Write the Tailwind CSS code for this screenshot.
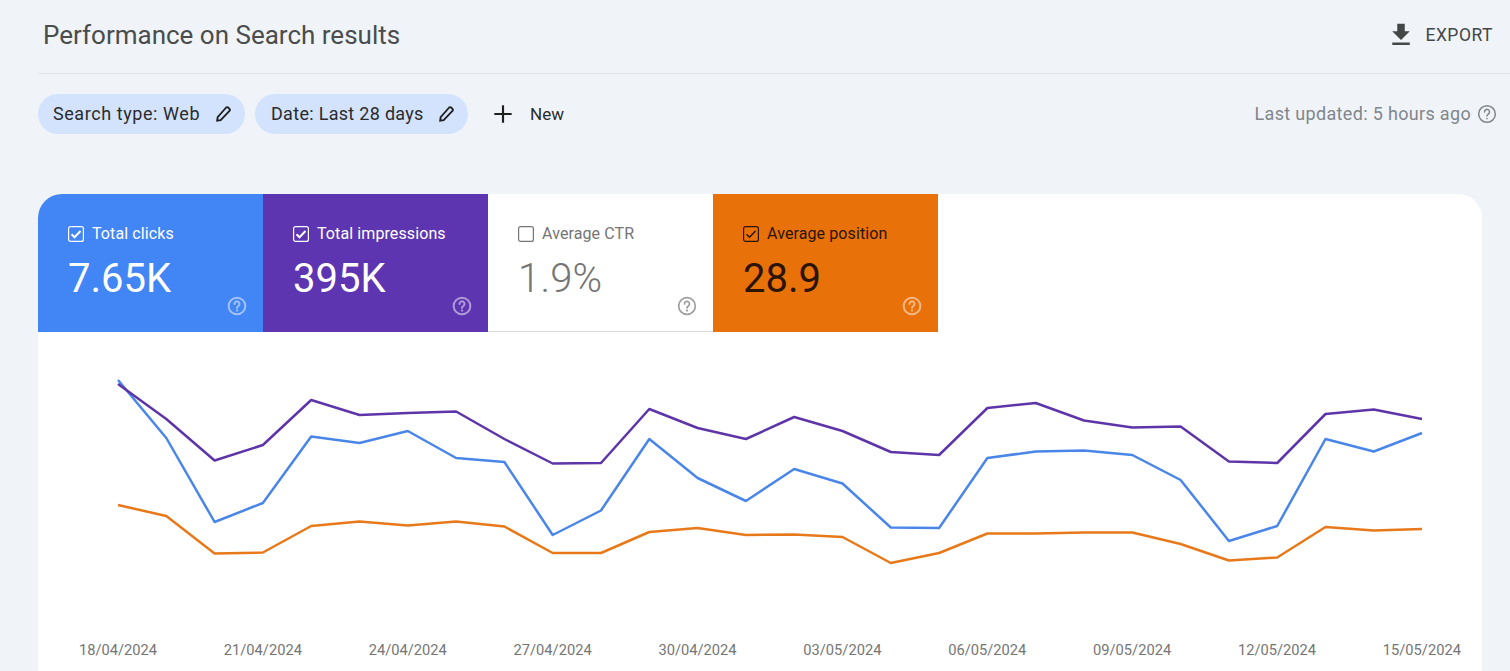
<!DOCTYPE html>
<html lang="en">
<head>
<meta charset="utf-8">
<title>Performance on Search results</title>
<script src="https://cdn.jsdelivr.net/npm/@tailwindcss/browser@4"></script>
</head>
<body class="h-[671px] overflow-hidden bg-[#f0f4f9] font-['Roboto',sans-serif]">
<header class="ml-[38px] flex h-[74px] items-center justify-between border-b border-[#dfe2e7] pb-[3px] pl-[5px] pr-[17px]">
  <h1 class="text-[26px] font-normal text-[#4a4d4c]">Performance on Search results</h1>
  <button class="flex items-center gap-[9px] text-[17.500px] font-[450] tracking-[0.5px] text-[#444746]">
    <svg class="h-[30px] w-[30px]" viewBox="0 0 24 24" fill="currentColor"><path d="M19 9h-4V3H9v6H5l7 7 7-7zM5 18v2h14v-2H5z"/></svg>
    EXPORT
  </button>
</header>
<div class="ml-[38px] mt-[20px] flex h-[40px] items-center pr-[13px]">
  <div class="flex h-[40px] w-[207px] items-center justify-between rounded-full bg-[#d3e3fd] pl-[15px] pr-[12px] text-[18px] tracking-[0.57px] text-[#2a2b2d]">
    <span class="pb-[1px]">Search type: Web</span>
    <svg class="h-[20px] w-[20px]" viewBox="0 0 24 24" fill="none" stroke="#1f1f1f" stroke-width="2.200"><path d="M5 20l.6-4.200L15.800 4.200a1.600 1.600 0 0 1 2.300 0l1.700 1.700a1.600 1.600 0 0 1 0 2.300L9.200 19.400 5 20z"/></svg>
  </div>
  <div class="ml-[10px] flex h-[40px] w-[213px] items-center justify-between rounded-full bg-[#d3e3fd] pl-[16px] pr-[12px] text-[18px] tracking-[0.3px] text-[#2a2b2d]">
    <span class="pb-[1px]">Date: Last 28 days</span>
    <svg class="h-[20px] w-[20px]" viewBox="0 0 24 24" fill="none" stroke="#1f1f1f" stroke-width="2.200"><path d="M5 20l.6-4.200L15.800 4.200a1.600 1.600 0 0 1 2.300 0l1.700 1.700a1.600 1.600 0 0 1 0 2.300L9.200 19.400 5 20z"/></svg>
  </div>
  <button class="ml-[22px] flex items-center gap-[14px] text-[17px] font-[450] text-[#2a2b2d]">
    <svg class="h-[26px] w-[26px]" viewBox="0 0 24 24" fill="none" stroke="#1f1f1f" stroke-width="2"><path d="M12 4v16M4 12h16"/></svg>
    <span class="pt-[1px]">New</span>
  </button>
  <div class="ml-auto flex items-center gap-[6px] text-[18px] tracking-[0.33px] text-[#80868b]">
    <span class="pb-[2px]">Last updated: 5 hours ago</span>
    <svg class="h-[20px] w-[20px]" viewBox="0 0 24 24" fill="none" stroke="currentColor" stroke-width="1.800"><circle cx="12" cy="12" r="10"/><path d="M9 9.500a3 3 0 1 1 4.600 2.500c-1 .7-1.600 1.300-1.600 2.500" stroke-linecap="round"/><circle cx="12" cy="17.500" r="1" fill="currentColor" stroke="none"/></svg>
  </div>
</div>
<main class="ml-[38px] mt-[60px] h-[477px] w-[1444px] overflow-hidden rounded-t-[24px] bg-white">
  <div class="flex h-[138px]">
    <div class="relative h-[138px] w-[225px] bg-[#4285f4] pl-[30px] pt-[28px] text-white">
      <div class="flex items-center gap-[8px] text-[16px] tracking-[0.1px]">
        <svg class="h-[16px] w-[16px]" viewBox="0 0 16 16" fill="none" stroke="currentColor" stroke-width="1.200"><rect x="0.600" y="0.600" width="14.800" height="14.800" rx="2"/><path d="M3.500 8.200l3 3 6-6.200" stroke-width="2"/></svg>
        <span>Total clicks</span>
      </div>
      <div class="mt-[9px] text-[40px] leading-[48px]">7.65K</div>
      <svg class="absolute bottom-[16px] right-[16px] h-[20px] w-[20px] opacity-50" viewBox="0 0 24 24" fill="none" stroke="currentColor" stroke-width="2.400"><circle cx="12" cy="12" r="10"/><path d="M9 9.500a3 3 0 1 1 4.600 2.500c-1 .7-1.600 1.300-1.600 2.500" stroke-linecap="round"/><circle cx="12" cy="17.500" r="1.400" fill="currentColor" stroke="none"/></svg>
    </div>
    <div class="relative h-[138px] w-[225px] bg-[#5e35b1] pl-[30px] pt-[28px] text-white">
      <div class="flex items-center gap-[8px] text-[16px] tracking-[0.1px]">
        <svg class="h-[16px] w-[16px]" viewBox="0 0 16 16" fill="none" stroke="currentColor" stroke-width="1.200"><rect x="0.600" y="0.600" width="14.800" height="14.800" rx="2"/><path d="M3.500 8.200l3 3 6-6.200" stroke-width="2"/></svg>
        <span>Total impressions</span>
      </div>
      <div class="mt-[9px] text-[40px] leading-[48px]">395K</div>
      <svg class="absolute bottom-[16px] right-[16px] h-[20px] w-[20px] opacity-50" viewBox="0 0 24 24" fill="none" stroke="currentColor" stroke-width="2.400"><circle cx="12" cy="12" r="10"/><path d="M9 9.500a3 3 0 1 1 4.600 2.500c-1 .7-1.600 1.300-1.600 2.500" stroke-linecap="round"/><circle cx="12" cy="17.500" r="1.400" fill="currentColor" stroke="none"/></svg>
    </div>
    <div class="relative h-[138px] w-[225px] border-b border-[#dadce0] bg-white pl-[30px] pt-[28px] text-[#757575]">
      <div class="flex items-center gap-[8px] text-[16px] tracking-[0.1px]">
        <svg class="h-[16px] w-[16px]" viewBox="0 0 16 16" fill="none" stroke="currentColor" stroke-width="1.200"><rect x="0.600" y="0.600" width="14.800" height="14.800" rx="2"/></svg>
        <span>Average CTR</span>
      </div>
      <div class="mt-[9px] text-[40px] font-light leading-[48px] tracking-[0.2px]">1.9%</div>
      <svg class="absolute bottom-[15px] right-[16px] h-[20px] w-[20px] opacity-70" viewBox="0 0 24 24" fill="none" stroke="currentColor" stroke-width="2"><circle cx="12" cy="12" r="10"/><path d="M9 9.500a3 3 0 1 1 4.600 2.500c-1 .7-1.600 1.300-1.600 2.500" stroke-linecap="round"/><circle cx="12" cy="17.500" r="1.400" fill="currentColor" stroke="none"/></svg>
    </div>
    <div class="relative h-[138px] w-[225px] bg-[#e8710a] pl-[30px] pt-[28px] text-[#2b1404]">
      <div class="flex items-center gap-[8px] text-[16px] tracking-[0.1px]">
        <svg class="h-[16px] w-[16px]" viewBox="0 0 16 16" fill="none" stroke="currentColor" stroke-width="1.200"><rect x="0.600" y="0.600" width="14.800" height="14.800" rx="2"/><path d="M3.500 8.200l3 3 6-6.200" stroke-width="1.500"/></svg>
        <span>Average position</span>
      </div>
      <div class="mt-[9px] text-[40px] leading-[48px]">28.9</div>
      <svg class="absolute bottom-[16px] right-[16px] h-[20px] w-[20px] text-white opacity-50" viewBox="0 0 24 24" fill="none" stroke="currentColor" stroke-width="2.400"><circle cx="12" cy="12" r="10"/><path d="M9 9.500a3 3 0 1 1 4.600 2.500c-1 .7-1.600 1.300-1.600 2.500" stroke-linecap="round"/><circle cx="12" cy="17.500" r="1.400" fill="currentColor" stroke="none"/></svg>
    </div>
  </div>
  <svg class="block h-[300px] w-[1444px]" viewBox="38 332 1444 300" fill="none" stroke-width="2.500" stroke-linejoin="round">
    <polyline stroke="#4a86e8" points="118,380 166.300,438 214.600,522 262.900,503 311.200,436.500 359.500,443 407.800,431 456.100,458 504.400,462 552.700,535 601,510.500 649.300,439 697.600,478 745.900,501 794.200,469 842.500,483.500 890.800,527.500 939.100,528 987.400,458 1035.700,451.500 1084,450.500 1132.300,455 1180.600,480 1228.900,541 1277.200,526 1325.500,439 1373.800,451.500 1422,433"/>
    <polyline stroke="#5e35a8" points="118,384 166.300,419 214.600,460.500 262.900,445 311.200,400 359.500,415 407.800,413 456.100,411.500 504.400,439 552.700,463.500 601,463 649.300,409 697.600,428 745.900,439 794.200,417 842.500,431 890.800,452 939.100,455 987.400,408 1035.700,403 1084,420.500 1132.300,427.500 1180.600,426.500 1228.900,461.500 1277.200,463 1325.500,414 1373.800,409.500 1422,419"/>
    <polyline stroke="#e8791a" points="118,505 166.300,516 214.600,553.500 262.900,552.500 311.200,526 359.500,521.500 407.800,525.500 456.100,521.500 504.400,526.500 552.700,553 601,553 649.300,532 697.600,528 745.900,535 794.200,534.500 842.500,537 890.800,563 939.100,553 987.400,533.500 1035.700,533.500 1084,532.500 1132.300,532.500 1180.600,544 1228.900,560.500 1277.200,557.500 1325.500,527 1373.800,530.500 1422,529"/>
  </svg>
  <div class="mt-[9px] flex justify-between pl-[40px] pr-[20px] text-[14.700px] leading-[18px] text-[#757575]">
    <span class="w-[80px] text-center">18/04/2024</span>
    <span class="w-[80px] text-center">21/04/2024</span>
    <span class="w-[80px] text-center">24/04/2024</span>
    <span class="w-[80px] text-center">27/04/2024</span>
    <span class="w-[80px] text-center">30/04/2024</span>
    <span class="w-[80px] text-center">03/05/2024</span>
    <span class="w-[80px] text-center">06/05/2024</span>
    <span class="w-[80px] text-center">09/05/2024</span>
    <span class="w-[80px] text-center">12/05/2024</span>
    <span class="w-[80px] text-center">15/05/2024</span>
  </div>
</main>
</body>
</html>
